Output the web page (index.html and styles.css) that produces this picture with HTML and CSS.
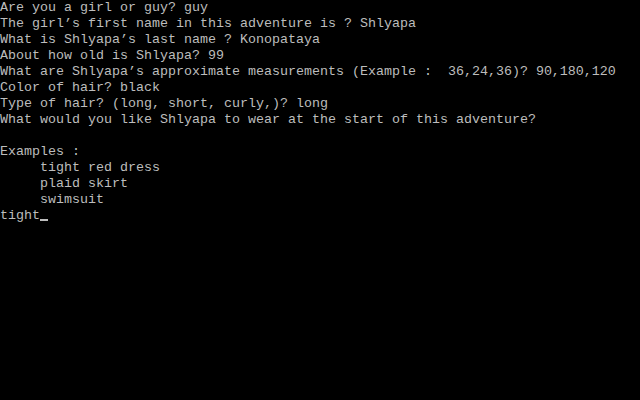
FILE: index.html
```html
<!DOCTYPE html>
<html>
<head>
<meta charset="utf-8">
<link rel="stylesheet" href="styles.css">
</head>
<body>
<pre class="screen">Are you a girl or guy? guy
The girl’s first name in this adventure is ? Shlyapa
What is Shlyapa’s last name ? Konopataya
About how old is Shlyapa? 99
What are Shlyapa’s approximate measurements (Example :  36,24,36)? 90,180,120
Color of hair? black
Type of hair? (long, short, curly,)? long
What would you like Shlyapa to wear at the start of this adventure?

Examples :
     tight red dress
     plaid skirt
     swimsuit
tight<span class="cursor"></span></pre>
</body>
</html>
```
FILE: styles.css
```css
html, body {
  margin: 0;
  padding: 0;
  background: #000;
  width: 640px;
  height: 400px;
  overflow: hidden;
}
.screen {
  margin: 0;
  padding: 0;
  color: #bdbdbd;
  font-family: "Liberation Mono", "DejaVu Sans Mono", monospace;
  font-size: 13.333px;
  line-height: 16px;
  white-space: pre;
}
.cursor {
  display: inline-block;
  width: 8px;
  height: 2px;
  background: #bdbdbd;
  vertical-align: -2px;
}
```
